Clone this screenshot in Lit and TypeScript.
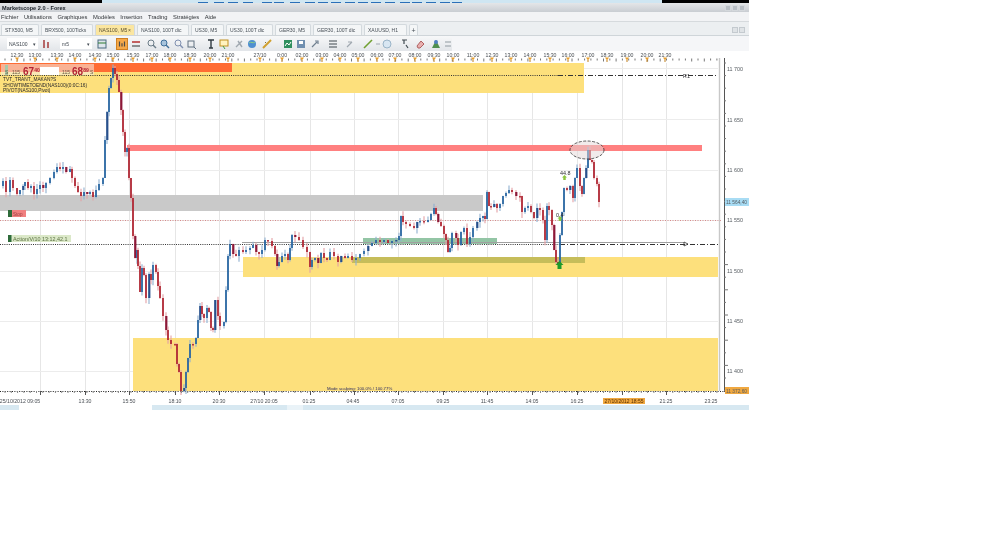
import { LitElement, html, css, svg } from "lit";
import { customElement } from "lit/decorators.js";

const PTS: [number, number][] = [[0,186],[3,181],[6,192],[10,180],[13,188],[17,194],[20,190],[23,186],[25,182],[28,188],[31,186],[34,194],[37,189],[40,185],[43,188],[46,183],[50,178],[54,172],[57,167],[60,169],[63,167],[66,172],[70,169],[72,178],[75,186],[78,192],[81,196],[84,192],[87,194],[90,192],[93,197],[96,190],[99,184],[103,178],[105,140],[107,112],[109,88],[111,78],[113,68],[115,74],[117,80],[119,92],[121,110],[123,132],[125,152],[127,148],[129,178],[131,198],[133,236],[135,258],[137,250],[138,266],[140,292],[142,268],[144,275],[146,298],[149,274],[151,280],[153,265],[156,272],[158,286],[160,298],[163,316],[166,330],[168,340],[171,344],[175,344],[177,364],[179,372],[181,391],[184,388],[186,372],[188,358],[190,344],[193,344],[196,338],[198,320],[200,306],[202,314],[204,318],[207,308],[209,312],[211,328],[213,330],[215,300],[218,316],[220,326],[224,322],[226,290],[228,256],[230,244],[233,254],[236,256],[239,250],[243,252],[246,250],[250,248],[253,245],[256,252],[259,254],[262,250],[265,240],[268,241],[272,246],[275,254],[277,266],[279,262],[282,256],[285,254],[288,260],[290,248],[292,235],[295,237],[299,240],[303,247],[307,252],[310,267],[312,260],[315,258],[318,263],[321,253],[324,258],[327,260],[330,252],[334,256],[338,262],[341,256],[345,258],[348,256],[352,260],[356,258],[360,254],[364,251],[368,246],[372,243],[376,240],[380,242],[384,240],[388,243],[392,241],[396,240],[399,236],[401,216],[403,222],[406,224],[410,226],[414,228],[417,222],[420,221],[424,222],[428,220],[431,214],[434,208],[436,214],[438,222],[441,226],[444,234],[446,240],[448,252],[450,248],[452,233],[456,238],[458,245],[461,232],[464,228],[467,244],[470,237],[473,228],[477,222],[480,218],[483,216],[485,219],[487,192],[489,206],[491,207],[494,204],[497,208],[500,204],[503,196],[506,193],[509,190],[512,192],[516,196],[520,196],[522,212],[525,208],[528,206],[531,212],[534,218],[537,208],[540,210],[543,220],[545,240],[547,206],[549,210],[552,225],[554,250],[556,262],[558,264],[560,235],[562,212],[564,188],[567,190],[570,186],[573,198],[575,178],[577,168],[580,186],[582,194],[584,178],[586,168],[588,150],[590,160],[592,162],[594,178],[597,184],[599,202]];

function rnd(i: number) { const v = Math.sin(i * 127.1 + 3.7) * 43758.5453; return v - Math.floor(v); }

const V_GRID = [40,85,129,175,219,264,310,354,398,443,487,532,577,622,666];
const H_GRID = [68,119,170,220,271,321,371];
const TOP_LABELS: [number,string][] = [[17,"12:30"],[35,"13:00"],[57,"13:30"],[75,"14:00"],[95,"14:30"],[113,"15:00"],[133,"15:30"],[152,"17:00"],[170,"18:00"],[190,"18:30"],[210,"20:00"],[228,"21:00"],[260,"27/10"],[282,"0:00"],[302,"02:00"],[322,"03:00"],[340,"04:00"],[358,"05:00"],[377,"06:00"],[395,"07:00"],[415,"08:00"],[434,"09:30"],[453,"10:00"],[473,"11:00"],[492,"12:30"],[511,"13:00"],[530,"14:00"],[550,"15:30"],[568,"16:00"],[588,"17:00"],[607,"18:30"],[627,"19:00"],[647,"20:00"],[665,"21:30"]];
const BOTTOM_LABELS: [number,string][] = [[20,"25/10/2012 09:05"],[85,"13:30"],[129,"15:50"],[175,"18:10"],[219,"20:30"],[264,"27/10 20:05"],[309,"01:25"],[353,"04:45"],[398,"07:05"],[443,"09:25"],[487,"11:45"],[532,"14:05"],[577,"16:25"],[666,"21:25"],[711,"23:25"]];
const PRICES: [number,string][] = [[69,"11 700"],[120,"11 650"],[170,"11 600"],[220,"11 550"],[271,"11 500"],[321,"11 450"],[371,"11 400"]];
const TABS: [string,number,boolean][] = [["STX500, M5",38,false],["BRX500, 100Ticks",52,false],["NAS100, M5",40,true],["NAS100, 100T dic",52,false],["US30, M5",33,false],["US30, 100T dic",47,false],["GER30, M5",36,false],["GER30, 100T dic",49,false],["XAUUSD, H1",43,false]];
const MENU = ["Fichier","Utilisations","Graphiques","Modèles","Insertion","Trading","Stratégies","Aide"];

const ICONS = [
  svg`<rect x="2" y="2" width="8" height="8" fill="#dfe6ec" stroke="#4a6a80"/><path d="M2 5h8" stroke="#2e7d32"/>`,
  svg`<path d="M3 3v6M6 5v4M9 3v6" stroke="#4a4a4a" stroke-width="1.4"/>`,
  svg`<path d="M2 4h8" stroke="#b02020" stroke-width="1.4"/><path d="M2 8h8" stroke="#303030"/>`,
  svg`<circle cx="5" cy="5" r="3" fill="none" stroke="#6b7c88"/><path d="M7 7l3 3" stroke="#6b7c88" stroke-width="1.4"/>`,
  svg`<circle cx="5" cy="5" r="3" fill="#a8c4dc" stroke="#3f6f9a"/><path d="M7 7l3 3" stroke="#3f6f9a" stroke-width="1.4"/>`,
  svg`<circle cx="5" cy="5" r="3" fill="none" stroke="#8090b0"/><path d="M7 7l3 3" stroke="#8090b0" stroke-width="1.4"/>`,
  svg`<rect x="2" y="3" width="6" height="6" fill="none" stroke="#607080"/><path d="M8 9l2 2" stroke="#607080"/>`,
  svg`<path d="M3 2h6M6 2v8M4 10h4" stroke="#303a40" stroke-width="1.4" fill="none"/>`,
  svg`<rect x="2" y="2" width="8" height="6" fill="#fff3c0" stroke="#c09020"/><path d="M5 8l2 3" stroke="#40a040"/>`,
  svg`<path d="M3 9l6-6M5 3l4 6" stroke="#a0a8b0" stroke-width="1.4"/>`,
  svg`<circle cx="6" cy="6" r="4" fill="#4f8fd0"/><path d="M3 5c2-2 4 1 6-1" stroke="#8fd080" fill="none"/>`,
  svg`<path d="M2 10L10 2" stroke="#d0a030" stroke-width="2"/><path d="M4 4l1 1" stroke="#807040"/>`,
  svg`<rect x="2" y="2" width="8" height="8" fill="#2f8f5f"/><path d="M3 8l2-3 2 2 2-3" stroke="#fff" fill="none"/>`,
  svg`<rect x="2" y="2" width="8" height="8" fill="#6f8fb0"/><rect x="4" y="3" width="4" height="3" fill="#fff"/>`,
  svg`<path d="M3 9l5-5M6 3h3v3" stroke="#708090" fill="none" stroke-width="1.2"/>`,
  svg`<path d="M2 3h8M2 6h8M2 9h8" stroke="#404a50" stroke-width="1.2"/>`,
  svg`<path d="M3 9l5-5M4 4h4" stroke="#a0a8b0" stroke-width="1.2" fill="none"/>`,
  svg`<path d="M2 10L10 2" stroke="#70a030" stroke-width="1.6"/>`,
  svg`<path d="M4 6h4" stroke="#a0a8b0"/>`,
  svg`<circle cx="6" cy="6" r="4" fill="#d8e6f2" stroke="#9ab4c8"/>`,
  svg`<path d="M3 2h5M5 2v4M7 7l2 3" stroke="#404a50" stroke-width="1.2" fill="none"/>`,
  svg`<path d="M3 8l4-5 3 3-4 4H4z" fill="#e8b0b0" stroke="#b06060"/>`,
  svg`<path d="M6 2l4 8H2z" fill="#4f8f4f"/><circle cx="6" cy="4" r="2" fill="#4f7fc0"/>`,
  svg`<path d="M3 4h6M3 8h6" stroke="#909aa0"/>`,
];
const GAPS = [4,8,2,4,1,2,1,7,1,3,1,3,9,1,2,6,5,6,-2,-3,6,3,4,0];
const DASHES = [198,214,228,243,262,274,290,305,318,331,345,358,371,385,400,412,426,440,452];

@customElement("app-root")
export class AppRoot extends LitElement {
  static styles = css`
    :host { display: block; width: 1000px; height: 547px; background: #fff; overflow: hidden; font-family: "Liberation Sans", Arial, sans-serif; }
    .app { width: 749px; height: 410px; display: flex; flex-direction: column; background: #f0f2f4; filter: blur(0.45px); }
    .strip { height: 3px; display: flex; flex: none; }
    .blk { background: #000; }
    .b1 { width: 102px; }
    .b2 { width: 87px; }
    .sky { background: #cfe6f2; flex: 1; }
    .title { height: 9px; flex: none; display: flex; align-items: center; justify-content: space-between; padding: 0 4px 0 2px; background: linear-gradient(#e4e6e8,#c9cdd2); font-size: 5.6px; font-weight: 700; color: #1c2228; }
    .winbtns { display: flex; gap: 1px; }
    .winbtns i { width: 6px; height: 6px; background: #b8bec4; border: 1px solid #d4d8dc; box-sizing: border-box; }
    .menu { height: 10px; box-sizing: border-box; flex: none; display: flex; gap: 5.5px; align-items: center; padding-left: 1px; background: #f2f3f5; font-size: 5.8px; color: #303438; border-bottom: 1px solid #d6dadd; }
    .tabs { height: 14px; flex: none; display: flex; gap: 2px; align-items: flex-end; padding-left: 1px; background: #eceff1; border-bottom: 1px solid #cfd5d9; box-sizing: border-box; }
    .tab { height: 11px; box-sizing: border-box; display: flex; align-items: center; justify-content: space-between; padding: 0 3px; background: #f4f6f7; border: 1px solid #d3d9dd; border-bottom: 0; font-size: 5px; color: #485058; white-space: nowrap; border-radius: 2px 2px 0 0; }
    .tab.on { background: #fbe6a0; color: #5a5030; }
    .tab.add { width: 9px; justify-content: center; padding: 0; font-size: 7px; }
    .tabsbtn { margin-left: auto; margin-right: 4px; margin-bottom: 2px; display: flex; gap: 1px; }
    .tabsbtn i { width: 6px; height: 6px; background: #dfe3e6; border: 1px solid #c4cacf; box-sizing: border-box; }
    .tool { height: 15px; flex: none; display: flex; align-items: center; background: #f5f6f8; }
    .bar { width: 452px; height: 15px; display: flex; align-items: center; padding-left: 7px; box-sizing: border-box; background: linear-gradient(#f7f8f9,#e2e5e9); }
    .sel { height: 11px; box-sizing: border-box; background: #fff; display: flex; align-items: center; justify-content: space-between; padding: 0 2px; font-size: 5px; color: #404850; flex: none; }
    .s1 { width: 31px; margin-right: 3px; }
    .s2 { width: 32px; margin-left: 7px; }
    .ic { width: 12px; height: 12px; flex: none; }
    .ic.act { background: #f5a848; border: 1px solid #d08020; box-sizing: border-box; }
    .chart { display: block; flex: none; background: #fff; }
    .foot { height: 5px; flex: none; display: flex; background: #d7e8f1; }
    .foot b { width: 133px; margin-left: 19px; background: #fff; }
    .foot u { width: 16px; margin-left: 135px; background: #eaf3f8; }
    text { font-family: "Liberation Sans", Arial, sans-serif; }
    .ax { font-size: 5.2px; fill: #4a4f55; text-anchor: middle; }
    .px { font-size: 5.4px; fill: #555b60; }
    .pb { font-size: 4.8px; fill: #555b60; }
    .st { font-size: 4.8px; fill: #28282c; }
    .lb { font-size: 5.4px; fill: #28282c; }
    .big { font-size: 10px; font-weight: 700; fill: #b32434; }
    .sm { font-size: 5px; fill: #6a5a40; }
    .stop { font-size: 4.6px; fill: #a04040; }
    .act { font-size: 5.4px; fill: #5a7040; }
    .mode { font-size: 4.3px; fill: #2a2a60; }
    .date { font-size: 5px; fill: #5a3000; text-anchor: middle; }
  `;

  candles() {
    const out = [];
    for (let i = 1; i < PTS.length; i++) {
      const [x0, y0] = PTS[i - 1];
      const [x, y] = PTS[i];
      const up = y < y0;
      const c = up ? "#1c5c9c" : "#aa1826";
      const pale = up ? "#8fb0d0" : "#e3a0a5";
      const top = Math.min(y, y0) - rnd(i) * 5;
      const bot = Math.max(y, y0) + rnd(i + 50) * 6;
      const shade = i % 7 === 0;
      out.push(svg`<path d="M${x} ${top}V${bot}" stroke=${pale} stroke-width="1.1"/>`);
      out.push(svg`<rect x=${x - 0.8} y=${Math.min(y, y0)} width=${shade ? 2.2 : 1.6} height=${Math.max(1.5, Math.abs(y - y0))} fill=${shade ? (up ? "#28508c" : "#8c1838") : c}/>`);
    }
    return out;
  }

  ticks() {
    const out = [];
    for (let x = 5; x < 720; x += 6.3) {
      out.push(svg`<path d="M${x} 58.5v${Math.round(x) % 4 === 0 ? 3 : 2}" stroke="#777"/>`);
      out.push(svg`<path d="M${x} 391v2" stroke="#888"/>`);
    }
    for (const [x] of TOP_LABELS) out.push(svg`<path d="M${x - 2} 57.5h4l-2 3z" fill="#e8a030"/><path d="M${x} 60v2" stroke="#c08020"/>`);
    for (const x of V_GRID) out.push(svg`<path d="M${x}.5 391v4" stroke="#555"/>`);
    for (let y = 63; y < 391; y += 12.6) out.push(svg`<path d="M724 ${y}h${Math.round(y) % 5 === 0 ? 4 : 2}" stroke="#777"/>`);
    return out;
  }

  arrow(x: number, y: number, s: number, c: string) {
    return svg`<path d="M${x} ${y}l${s} ${s}h${-s * 0.5}v${s}h${-s}v${-s}h${-s * 0.5}z" fill=${c}/>`;
  }

  plot() {
    const Y = 51;
    return svg`<svg class="chart" width="749" height="354" viewBox="0 ${Y} 749 354">
      <rect x="0" y="51" width="749" height="354" fill="#fff"/>
      ${TOP_LABELS.map(([x, t]) => svg`<text class="ax" x=${x} y="56.5">${t}</text>`)}
      ${V_GRID.map(x => svg`<path d="M${x}.5 63V391" stroke="#e6e6e6"/>`)}
      ${H_GRID.map(y => svg`<path d="M0 ${y}.5H718" stroke="#ececec"/>`)}
      <rect x="0" y="63" width="584" height="30" fill="#fde07c"/>
      <rect x="0" y="63" width="232" height="9" fill="#ff6c33"/>
      <rect x="127" y="145" width="575" height="6" fill="#ff8080"/>
      <rect x="0" y="195" width="483" height="16" fill="#c9c9c9"/>
      <rect x="243" y="257" width="475" height="20" fill="#fde07c"/>
      <rect x="133" y="338" width="585" height="53" fill="#fde07c"/>
      <rect x="363" y="238" width="134" height="6" fill="#93c5a5"/>
      <rect x="352" y="257" width="233" height="6" fill="#c6bd5a"/>
      <path d="M0 220.5H722" stroke="#d88a8a" stroke-dasharray="1 1.5"/>
      <path d="M242 242.5H684" stroke="#a0a0a0"/>
      <path d="M0 75.5H558" stroke="#333" stroke-dasharray="1 1.2"/>
      <path d="M558 75.5H718" stroke="#333" stroke-dasharray="5 2 1 2"/>
      <path d="M0 244.5H560" stroke="#333" stroke-dasharray="1 1.2"/>
      <path d="M560 244.5H718" stroke="#333" stroke-dasharray="5 2 1 2"/>
      <path d="M0 391.5H724" stroke="#222" stroke-dasharray="1 1.4"/>
      <path d="M719.5 58V391" stroke="#c8c8c8" stroke-width="1.4"/>
      <path d="M724.5 58V392" stroke="#555"/>
      <path d="M684 242l4 2-4 2z" fill="none" stroke="#333" stroke-width=".8"/>
      <text x="683" y="77.5" class="lb">R1</text>
      ${this.candles()}
      <ellipse cx="587" cy="150" rx="17" ry="9" fill="rgba(228,215,215,.5)" stroke="#333" stroke-dasharray="3 1.5" stroke-width=".8"/>
      ${this.arrow(559.5, 261, 4, "#1d9a2a")}
      ${this.arrow(564.5, 175, 2.5, "#8cc63f")}
      ${this.arrow(560, 216, 2.5, "#8cc63f")}
      <text x="560" y="174.5" class="lb">44.8</text>
      <text x="556" y="216.5" class="lb">0.4</text>
      <rect x="1" y="64" width="93" height="11" fill="#f4ece4" opacity=".55"/>
      <rect x="5" y="65" width="3" height="10" fill="#a8c8a8"/>
      <text x="5" y="74" class="sm">S</text>
      <text x="12" y="74" class="sm">115</text>
      <text x="23" y="74.5" class="big">67<tspan font-size="5" dy="-3">40</tspan></text>
      <rect x="40" y="67" width="19" height="8" fill="#fff"/>
      <text x="62" y="74" class="sm">115</text>
      <text x="72" y="74.5" class="big">68<tspan font-size="5" dy="-3">89</tspan></text>
      <text x="90" y="74" class="sm">S</text>
      <text x="3" y="81" class="st">TVT_TRANT_MAKAN?S</text>
      <text x="3" y="86.5" class="st">SHOWTIMETOEND(NAS100)(0:0C:16)</text>
      <text x="3" y="91.5" class="st">PIVOT(NAS100,Pivot)</text>
      <rect x="8" y="210" width="18" height="7" fill="#f08080"/>
      <rect x="8" y="210" width="4" height="7" fill="#2e6b3a"/>
      <text x="13" y="215.5" class="stop">Stop</text>
      <rect x="8" y="235" width="63" height="7" fill="#dbe8c8"/>
      <rect x="8" y="235" width="3.5" height="7" fill="#2e6b3a"/>
      <text x="13" y="240.5" class="act">Action/V/10 13:12,42.1</text>
      <text x="327" y="390" class="mode">Mode scalping: 100.0% / 100.77%</text>
      ${this.ticks()}
      ${BOTTOM_LABELS.map(([x, t]) => svg`<text class="ax" x=${x} y="403">${t}</text>`)}
      <rect x="603" y="398" width="42" height="6" fill="#f0a840"/>
      <text class="date" x="624" y="403">27/10/2012 18:55</text>
      ${PRICES.map(([y, t]) => svg`<text class="px" x="727" y=${y + 2}>${t}</text>`)}
      <rect x="725" y="198" width="24" height="8" fill="#a8dcf4"/>
      <text class="pb" x="726" y="204">11 564,40</text>
      <rect x="725" y="387" width="24" height="7" fill="#f0a840"/>
      <text class="pb" x="726" y="392.5">11 372,60</text>
    </svg>`;
  }

  render() {
    return html`<div class="app">
      <div class="strip"><div class="blk b1"></div><svg class="sky" height="3" viewBox="0 0 560 3" preserveAspectRatio="none">${DASHES.map(x => svg`<path d="M${x - 102} 2.5h10" stroke="#2a70b8"/>`)}</svg><div class="blk b2"></div></div>
      <div class="title"><span>Marketscope 2.0 - Forex</span><span class="winbtns"><i></i><i></i><i></i></span></div>
      <div class="menu">${MENU.map(m => html`<span>${m}</span>`)}</div>
      <div class="tabs">
        ${TABS.map(([t, w, on]) => html`<div class="tab ${on ? "on" : ""}" style="width:${w}px"><span>${t}</span>${on ? html`<span>×</span>` : ""}</div>`)}
        <div class="tab add">+</div>
        <div class="tabsbtn"><i></i><i></i></div>
      </div>
      <div class="tool"><div class="bar">
        <div class="sel s1"><span>NAS100</span><span>▾</span></div>
        <svg class="ic" viewBox="0 0 12 12"><path d="M3 2v8M7 4v6" stroke="#a03030" stroke-width="1.4"/></svg>
        <div class="sel s2"><span>m5</span><span>▾</span></div>
        ${ICONS.map((ic, i) => html`<svg class="ic ${i === 1 ? "act" : ""}" style="margin-left:${GAPS[i]}px" viewBox="0 0 12 12">${ic}</svg>`)}
      </div></div>
      ${this.plot()}
      <div class="foot"><b></b><u></u></div>
    </div>`;
  }
}
